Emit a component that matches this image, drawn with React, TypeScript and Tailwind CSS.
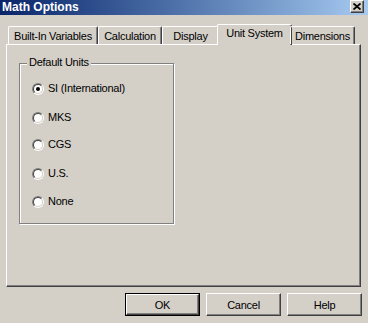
import React from "react";

const tabs = [
  { label: "Built-In Variables", w: "w-[90px]" },
  { label: "Calculation", w: "w-[64px]" },
  { label: "Display", w: "w-[57px]" },
  { label: "Unit System", w: "w-[75px]", active: true },
  { label: "Dimensions", w: "w-[65px]" },
];

const units = [
  { label: "SI (International)", mt: "mt-0", checked: true },
  { label: "MKS", mt: "mt-[16px]" },
  { label: "CGS", mt: "mt-[14px]" },
  { label: "U.S.", mt: "mt-[16px]" },
  { label: "None", mt: "mt-[15px]" },
];

function Radio({ checked }: { checked?: boolean }) {
  return (
    <span className="flex h-[12px] w-[12px] shrink-0 rounded-full border border-t-[#808080] border-l-[#808080] border-b-white border-r-white">
      <span className="flex h-full w-full items-center justify-center rounded-full border border-t-[#404040] border-l-[#404040] border-b-[#d4d0c8] border-r-[#d4d0c8] bg-white">
        {checked && <span className="h-[4px] w-[4px] rounded-full bg-black" />}
      </span>
    </span>
  );
}

function Button({ label, isDefault }: { label: string; isDefault?: boolean }) {
  return (
    <div className={`flex h-[23px] w-[75px] ${isDefault ? "border border-black" : ""}`}>
      <div className="flex flex-1 items-center justify-center border border-t-white border-l-white border-b-[#404040] border-r-[#404040] pt-px shadow-[inset_-1px_-1px_0_#808080]">
        {label}
      </div>
    </div>
  );
}

export default function App() {
  return (
    <div className="flex h-[323px] w-[368px] flex-col overflow-hidden bg-[#d4d0c8] font-['Liberation_Sans',Arial,sans-serif] text-[11px] tracking-[-0.25px] text-black">
      {/* Title bar */}
      <div className="flex h-[15px] items-start justify-between bg-linear-to-r from-[#0a246a] to-[#a6caf0] pl-[2px] pr-[4px]">
        <span className="self-center text-[12px] leading-[15px] font-bold tracking-normal text-white">Math Options</span>
        <div className="flex h-[13px] w-[14px] items-center justify-center border border-t-white border-l-white border-b-[#404040] border-r-[#404040] bg-[#d4d0c8] shadow-[inset_-1px_-1px_0_#808080]">
          <svg width="8" height="7" viewBox="0 0 8 7">
            <path d="M0.5 0.5 L7.5 6.5 M7.5 0.5 L0.5 6.5" stroke="black" strokeWidth="1.8" />
          </svg>
        </div>
      </div>

      {/* Tabs */}
      <div className="ml-[6px] mt-[9px] w-[355px]">
        <div className="relative z-10 ml-[2px] flex h-[20px] items-end">
          {tabs.map((t) =>
            t.active ? (
              <div
                key={t.label}
                className={`-mx-[2px] -mb-px flex h-[21px] ${t.w} items-center justify-center rounded-t-[2px] border-l border-t border-r border-l-white border-t-white border-r-[#404040] bg-[#d4d0c8] pb-[3px] shadow-[inset_-1px_0_0_#808080]`}
              >
                {t.label}
              </div>
            ) : (
              <div
                key={t.label}
                className={`flex h-[18px] ${t.w} items-center justify-center rounded-t-[2px] border-l border-t border-r border-l-white border-t-white border-r-[#404040] pt-[1px] shadow-[inset_-1px_0_0_#808080]`}
              >
                {t.label}
              </div>
            )
          )}
        </div>

        {/* Panel */}
        <div className="h-[243px] border border-t-white border-l-white border-b-[#404040] border-r-[#404040] pl-[12px] pt-[18px] shadow-[inset_-1px_-1px_0_#808080]">
          <div className="relative h-[161px] w-[155px] border border-[#808080] pl-[12px] pt-[18px] shadow-[inset_1px_1px_0_#fff,1px_1px_0_#fff]">
            <span className="absolute -top-[8px] left-[7px] bg-[#d4d0c8] px-[2px] leading-[13px]">Default Units</span>
            <div className="flex flex-col">
              {units.map((u) => (
                <label key={u.label} className={`flex h-[13px] items-center gap-[4px] ${u.mt}`}>
                  <Radio checked={u.checked} />
                  <span>{u.label}</span>
                </label>
              ))}
            </div>
          </div>
        </div>
      </div>

      {/* Buttons */}
      <div className="ml-[125px] mt-[6px] flex gap-[6px]">
        <Button label="OK" isDefault />
        <Button label="Cancel" />
        <Button label="Help" />
      </div>
    </div>
  );
}
